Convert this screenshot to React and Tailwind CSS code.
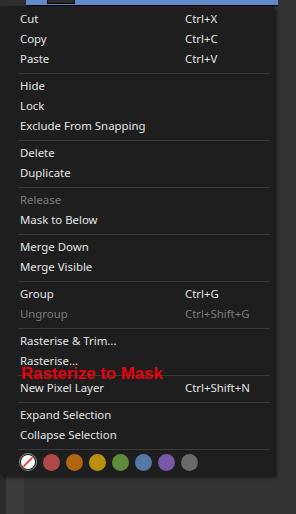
const groups = [
  [
    { label: "Cut", shortcut: "Ctrl+X" },
    { label: "Copy", shortcut: "Ctrl+C" },
    { label: "Paste", shortcut: "Ctrl+V" },
  ],
  [{ label: "Hide" }, { label: "Lock" }, { label: "Exclude From Snapping" }],
  [{ label: "Delete" }, { label: "Duplicate" }],
  [{ label: "Release", disabled: true }, { label: "Mask to Below" }],
  [{ label: "Merge Down" }, { label: "Merge Visible" }],
  [
    { label: "Group", shortcut: "Ctrl+G" },
    { label: "Ungroup", shortcut: "Ctrl+Shift+G", disabled: true },
  ],
  [{ label: "Rasterise & Trim..." }, { label: "Rasterise..." }],
  [{ label: "New Pixel Layer", shortcut: "Ctrl+Shift+N" }],
  [{ label: "Expand Selection" }, { label: "Collapse Selection" }],
];

const swatches = ["#b04848", "#b06612", "#b8920f", "#5e8a3c", "#5479a8", "#7757a8", "#6a6a6a"];

function MenuItem({ label, shortcut, disabled }) {
  return (
    <div
      className={`flex items-center h-[20px] pl-[20px] ${
        disabled ? "text-[#7c7c7c]" : "text-[#e4e4e4]"
      }`}
    >
      <span className="w-[165px] whitespace-nowrap">{label}</span>
      {shortcut && <span className="whitespace-nowrap">{shortcut}</span>}
    </div>
  );
}

function Separator() {
  return <div className="mt-[4px] mb-[2px] ml-[18px] mr-[4px] h-px bg-[#3a3a3a]" />;
}

export default function App() {
  return (
    <div className="relative w-[296px] h-[514px] overflow-hidden bg-[#333333] font-['Noto_Sans',sans-serif] text-[11.4px]">
      {/* background app content */}
      <div className="flex h-[6px]">
        <div className="w-[26px] bg-[#2d2d2d]" />
        <div className="w-[252px] bg-[#5f8acb] border-b border-black">
          <div className="ml-[21px] w-[28px] h-[4px] bg-[#2a2a2a] border border-t-0 border-black" />
        </div>
      </div>
      <div className="flex h-full">
        <div className="w-[6px] bg-[#2b2b2b]" />
        <div className="w-[18px] bg-[#3a3a3a]" />
      </div>

      {/* context menu */}
      <div className="absolute left-0 top-[6px] w-[274px] bg-[#1e1e1e] pt-[3px] pb-[3px] shadow-[3px_3px_3px_rgba(0,0,0,0.45)]">
        {groups.map((g, i) => (
          <div key={i}>
            {g.map((item) => (
              <MenuItem key={item.label} {...item} />
            ))}
            <Separator />
          </div>
        ))}
        <div className="flex items-center gap-[4px] h-[20px] pl-[19px]">
          <div className="w-[18px] h-[18px] rounded-full border border-[#8a8a8a] flex items-center justify-center">
            <svg width="14" height="14" viewBox="0 0 14 14">
              <circle cx="7" cy="7" r="7" fill="#ffffff" />
              <line x1="2.5" y1="11.5" x2="11.5" y2="2.5" stroke="#ee1c1c" strokeWidth="1.6" />
            </svg>
          </div>
          {swatches.map((c) => (
            <div
              key={c}
              className="w-[17px] h-[17px] ml-[2px] rounded-full"
              style={{ backgroundColor: c }}
            />
          ))}
        </div>
      </div>

      {/* annotation */}
      <div className="absolute left-[21px] top-[363px] text-[16.8px] leading-[22px] font-bold text-[#e8000c] font-['Liberation_Sans',sans-serif]">
        Rasterize to Mask
      </div>
    </div>
  );
}
